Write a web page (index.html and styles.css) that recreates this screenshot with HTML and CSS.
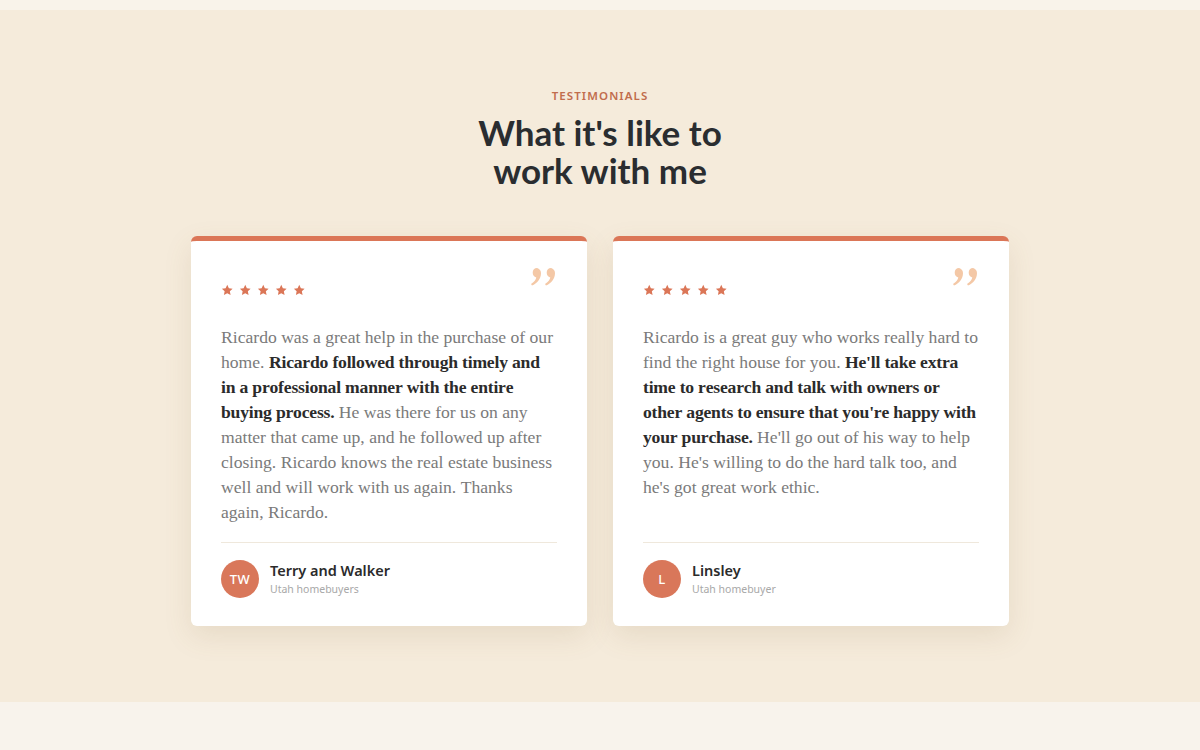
FILE: index.html
```html
<!DOCTYPE html>
<html lang="en">
<head>
    <meta charset="UTF-8">
    <meta name="viewport" content="width=device-width, initial-scale=1.0">
    <title>Testimonials</title>
    <link rel="stylesheet" href="styles.css">
</head>
<body>
    <div class="top-strip"></div>

    <section class="testimonials">
        <p class="eyebrow">TESTIMONIALS</p>
        <h2 class="section-title">What it's like to<br>work with me</h2>

        <div class="cards">
            <div class="card">
                <div class="card-head">
                    <div class="stars">
                        <svg viewBox="0 0 24 24"><path d="M12 1.5l3.1 6.6 7.2.9-5.3 5 1.4 7.1L12 17.6l-6.4 3.5 1.4-7.1-5.3-5 7.2-.9z"/></svg>
                        <svg viewBox="0 0 24 24"><path d="M12 1.5l3.1 6.6 7.2.9-5.3 5 1.4 7.1L12 17.6l-6.4 3.5 1.4-7.1-5.3-5 7.2-.9z"/></svg>
                        <svg viewBox="0 0 24 24"><path d="M12 1.5l3.1 6.6 7.2.9-5.3 5 1.4 7.1L12 17.6l-6.4 3.5 1.4-7.1-5.3-5 7.2-.9z"/></svg>
                        <svg viewBox="0 0 24 24"><path d="M12 1.5l3.1 6.6 7.2.9-5.3 5 1.4 7.1L12 17.6l-6.4 3.5 1.4-7.1-5.3-5 7.2-.9z"/></svg>
                        <svg viewBox="0 0 24 24"><path d="M12 1.5l3.1 6.6 7.2.9-5.3 5 1.4 7.1L12 17.6l-6.4 3.5 1.4-7.1-5.3-5 7.2-.9z"/></svg>
                    </div>
                    <svg class="quote-mark" viewBox="0 0 27 20">
                        <path d="M6 1a5 5 0 0 1 5 5c0 6-4 10.5-9 12.5l-1-1.6c3-1.6 4.8-3.8 5.3-6.4A5 5 0 0 1 6 1z"/>
                        <path d="M20 1a5 5 0 0 1 5 5c0 6-4 10.5-9 12.5l-1-1.6c3-1.6 4.8-3.8 5.3-6.4A5 5 0 0 1 20 1z"/>
                    </svg>
                </div>
                <p class="quote">Ricardo was a great help in the purchase of our home. <strong>Ricardo followed through timely and in a professional manner with the entire buying process.</strong> He was there for us on any matter that came up, and he followed up after closing. Ricardo knows the real estate business well and will work with us again. Thanks again, Ricardo.</p>
                <div class="author">
                    <div class="avatar">TW</div>
                    <div>
                        <div class="author-name">Terry and Walker</div>
                        <div class="author-role">Utah homebuyers</div>
                    </div>
                </div>
            </div>

            <div class="card">
                <div class="card-head">
                    <div class="stars">
                        <svg viewBox="0 0 24 24"><path d="M12 1.5l3.1 6.6 7.2.9-5.3 5 1.4 7.1L12 17.6l-6.4 3.5 1.4-7.1-5.3-5 7.2-.9z"/></svg>
                        <svg viewBox="0 0 24 24"><path d="M12 1.5l3.1 6.6 7.2.9-5.3 5 1.4 7.1L12 17.6l-6.4 3.5 1.4-7.1-5.3-5 7.2-.9z"/></svg>
                        <svg viewBox="0 0 24 24"><path d="M12 1.5l3.1 6.6 7.2.9-5.3 5 1.4 7.1L12 17.6l-6.4 3.5 1.4-7.1-5.3-5 7.2-.9z"/></svg>
                        <svg viewBox="0 0 24 24"><path d="M12 1.5l3.1 6.6 7.2.9-5.3 5 1.4 7.1L12 17.6l-6.4 3.5 1.4-7.1-5.3-5 7.2-.9z"/></svg>
                        <svg viewBox="0 0 24 24"><path d="M12 1.5l3.1 6.6 7.2.9-5.3 5 1.4 7.1L12 17.6l-6.4 3.5 1.4-7.1-5.3-5 7.2-.9z"/></svg>
                    </div>
                    <svg class="quote-mark" viewBox="0 0 27 20">
                        <path d="M6 1a5 5 0 0 1 5 5c0 6-4 10.5-9 12.5l-1-1.6c3-1.6 4.8-3.8 5.3-6.4A5 5 0 0 1 6 1z"/>
                        <path d="M20 1a5 5 0 0 1 5 5c0 6-4 10.5-9 12.5l-1-1.6c3-1.6 4.8-3.8 5.3-6.4A5 5 0 0 1 20 1z"/>
                    </svg>
                </div>
                <p class="quote">Ricardo is a great guy who works really hard to find the right house for you. <strong>He'll take extra time to research and talk with owners or other agents to ensure that you're happy with your purchase.</strong> He'll go out of his way to help you. He's willing to do the hard talk too, and he's got great work ethic.</p>
                <div class="author">
                    <div class="avatar">L</div>
                    <div>
                        <div class="author-name">Linsley</div>
                        <div class="author-role">Utah homebuyer</div>
                    </div>
                </div>
            </div>
        </div>
    </section>

    <div class="next-section"></div>
</body>
</html>
```

FILE: styles.css
```css
body, html {
    margin: 0;
    padding: 0;
    font-family: "Noto Sans", Arial, sans-serif;
    background-color: #f8f3ec;
}
.top-strip {
    height: 10px;
    background-color: #f9f3ea;
}
.testimonials {
    background-color: #f5ebdb;
    padding: 79px 20px 76px;
    text-align: center;
}
.eyebrow {
    margin: 0;
    font-size: 11.5px;
    line-height: 14px;
    letter-spacing: 1.1px;
    font-weight: 600;
    color: #c16d4d;
}
.section-title {
    margin: 10px 0 47px;
    font-family: Lato, "Noto Sans", sans-serif;
    font-size: 35px;
    line-height: 38px;
    font-weight: 700;
    color: #2a2d30;
}
.cards {
    display: grid;
    grid-template-columns: 396px 396px;
    gap: 26px;
    justify-content: center;
    text-align: left;
}
.card {
    display: flex;
    flex-direction: column;
    background-color: #fff;
    border-top: 5px solid #db7657;
    border-radius: 6px;
    padding: 26px 30px 28px;
    box-shadow: 0 10px 28px rgba(140, 105, 60, 0.13);
}
.card-head {
    display: flex;
    justify-content: space-between;
    align-items: flex-start;
}
.stars {
    display: flex;
    gap: 5.5px;
    margin-top: 17px;
}
.stars svg {
    width: 12.5px;
    height: 12.5px;
    fill: #db7657;
}
.quote-mark {
    width: 27px;
    height: 20px;
    fill: #f4c8a6;
}
.quote {
    margin: 28px 0 17px;
    font-family: "Liberation Serif", "Times New Roman", serif;
    font-size: 17.62px;
    line-height: 25px;
    font-kerning: none;
    color: #7a7a7a;
}
.quote strong {
    color: #2b2b2b;
    font-weight: 700;
    letter-spacing: -0.2px;
}
.author {
    margin-top: auto;
    border-top: 1px solid #efe8dc;
    padding-top: 17px;
    display: flex;
    align-items: center;
    gap: 11px;
}
.avatar {
    width: 38px;
    height: 38px;
    border-radius: 50%;
    background-color: #d9775a;
    color: #fff;
    font-size: 13px;
    font-weight: 500;
    display: flex;
    align-items: center;
    justify-content: center;
    letter-spacing: 0.5px;
}
.author-name {
    font-size: 14.5px;
    line-height: 20px;
    font-weight: 600;
    color: #2b2b2b;
}
.author-role {
    margin-top: 1px;
    font-size: 10.5px;
    line-height: 16px;
    color: #a8a8a8;
}
.next-section {
    height: 48px;
    background-color: #f8f3ec;
}
```
